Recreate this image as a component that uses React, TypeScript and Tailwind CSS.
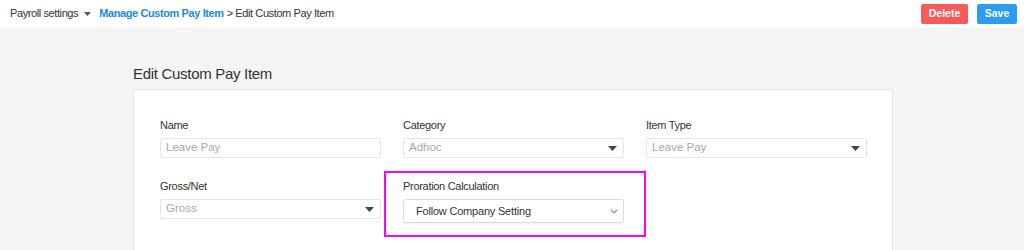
import React from "react";

const Caret = () => (
  <svg width="9" height="5" viewBox="0 0 9 5" className="shrink-0">
    <path d="M0 0 L9 0 L4.5 5 Z" fill="#444" />
  </svg>
);

const Chevron = () => (
  <svg width="8" height="5" viewBox="0 0 8 5" className="shrink-0">
    <path d="M1 1 L4 4 L7 1" fill="none" stroke="#888" strokeWidth="1.1" />
  </svg>
);

function Field({ label, value, select }: { label: string; value: string; select?: boolean }) {
  return (
    <div className="flex flex-col">
      <div className="text-[11px] tracking-[-0.3px] leading-[16px] text-[#333] mb-[5px]">{label}</div>
      <div className="h-[20px] border border-[#e6e6e6] rounded-[2px] bg-white flex items-center justify-between pl-[5px] pr-[6px]">
        <span className="text-[11.5px] text-[#a8a8a8] leading-none">{value}</span>
        {select && <Caret />}
      </div>
    </div>
  );
}

export default function App() {
  return (
    <div className="w-[1024px] h-[250px] overflow-hidden bg-[#f5f5f5] font-['Liberation_Sans',Arial,sans-serif]">
      <div className="h-[27px] bg-white flex items-center justify-between pl-[10px] pr-[7px]">
        <div className="flex items-center text-[11px] tracking-[-0.4px] text-[#333]">
          <span>Payroll settings</span>
          <span className="ml-[6px] mr-[8px] flex">
            <svg width="7" height="4" viewBox="0 0 7 4">
              <path d="M0 0 L7 0 L3.5 4 Z" fill="#555" />
            </svg>
          </span>
          <span className="font-bold text-[#1b8bd6]">Manage Custom Pay Item</span>
          <span className="ml-[3px]">&gt; Edit Custom Pay Item</span>
        </div>
        <div className="flex items-center gap-[9px]">
          <button className="h-[20px] w-[47px] rounded-[2px] bg-[#f65b5c] text-white text-[10.5px] font-bold">Delete</button>
          <button className="h-[20px] w-[40px] rounded-[2px] bg-[#2d9bf0] text-white text-[10.5px] font-bold">Save</button>
        </div>
      </div>
      <div className="ml-[133px] w-[760px] pt-[37px]">
        <div className="text-[15px] tracking-[-0.3px] leading-[20px] text-[#333] mb-[5px]">Edit Custom Pay Item</div>
        <div className="bg-white border border-[#e4e4e4] rounded-[2px] pt-[27px] px-[26px] pb-[30px]">
          <div className="grid grid-cols-[221px_221px_221px] gap-x-[22px] gap-y-[20px]">
            <Field label="Name" value="Leave Pay" />
            <Field label="Category" value="Adhoc" select />
            <Field label="Item Type" value="Leave Pay" select />
            <Field label="Gross/Net" value="Gross" select />
            <div className="relative flex flex-col">
              <div className="absolute left-[-19px] right-[-22px] top-[-7px] bottom-[-14px] border-2 border-[#ff00ff] pointer-events-none" />
              <div className="text-[11px] tracking-[-0.3px] leading-[16px] text-[#333] mb-[5px]">Proration Calculation</div>
              <div className="h-[24px] border border-[#dcdcdc] rounded-[3px] bg-white shadow-[0_1px_1px_rgba(0,0,0,0.05)] flex items-center justify-between pl-[12px] pr-[5px]">
                <span className="text-[11px] tracking-[-0.2px] text-[#333] leading-none">Follow Company Setting</span>
                <Chevron />
              </div>
            </div>
            <div />
          </div>
        </div>
      </div>
    </div>
  );
}
